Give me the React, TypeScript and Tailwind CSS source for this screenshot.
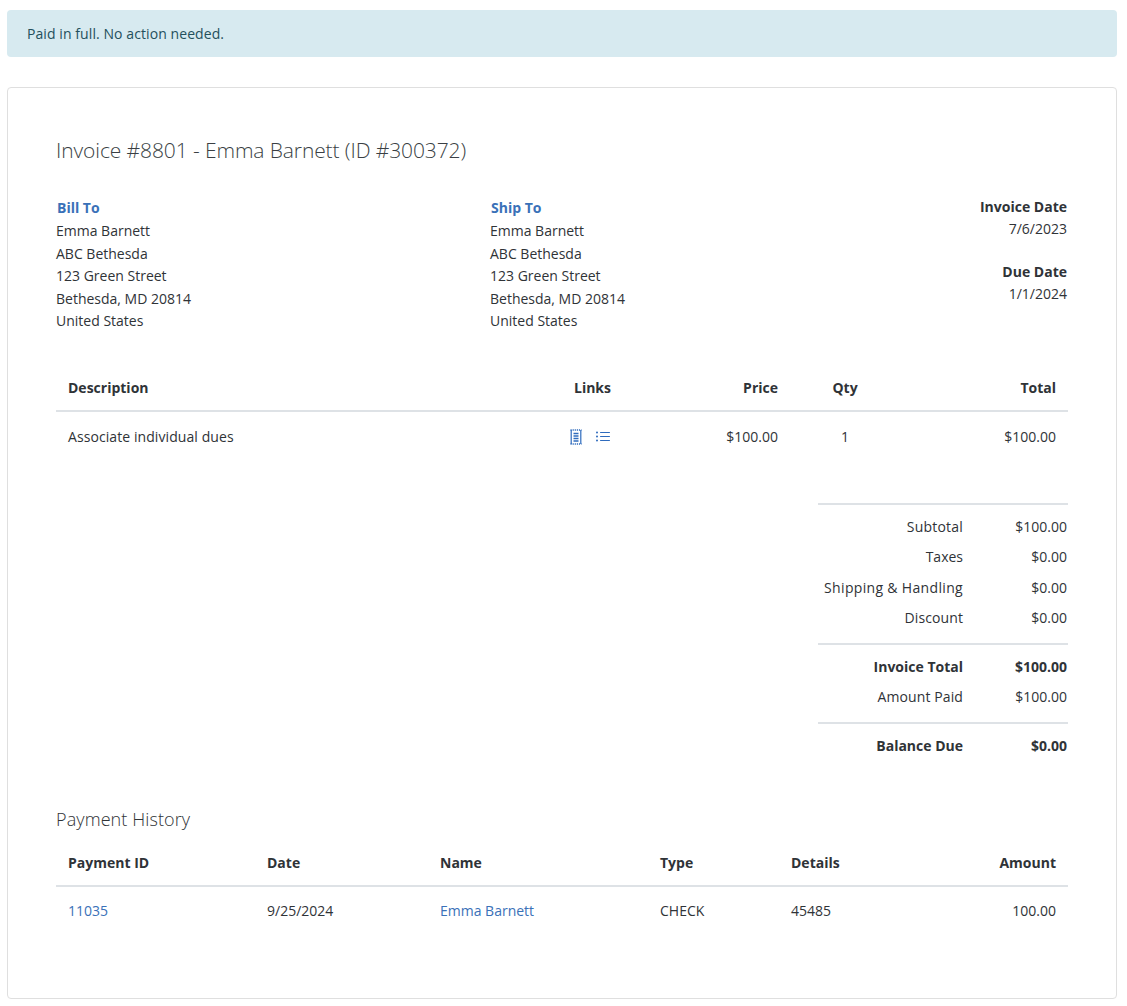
import { BsListUl } from "react-icons/bs";

const address = ["Emma Barnett", "ABC Bethesda", "123 Green Street", "Bethesda, MD 20814", "United States"];

function ReceiptIcon() {
  return (
    <svg width="12" height="16" viewBox="0 0 12 16" fill="none" stroke="currentColor" strokeWidth="1.2">
      <path d="M1.2 1v14M10.8 1v14" />
      <path d="M0.5 1h11M0.5 15h11" strokeWidth="1.3" strokeDasharray="1.2 0.9" />
      <path d="M3.5 4.5h5M3.5 7h5M3.5 9.5h5M3.5 12h5" strokeWidth="1.3" />
    </svg>
  );
}

function Address({ title, className }: { title: string; className: string }) {
  return (
    <div className={className}>
      <div className="h-[24px] pl-px font-bold leading-[23px] text-[#3a71b8]">{title}</div>
      {address.map((line) => (
        <div key={line} className="h-[22.5px] leading-[22.5px]">
          {line}
        </div>
      ))}
    </div>
  );
}

function SummaryRow({ label, value, bold, height, labelClass }: { label: string; value: string; bold?: boolean; height: string; labelClass?: string }) {
  return (
    <div className={`flex items-center ${height} ${bold ? "font-bold" : ""}`}>
      <div className={`w-[145px] whitespace-nowrap text-right ${labelClass ?? ""}`}>{label}</div>
      <div className="flex-1 pr-px text-right">{value}</div>
    </div>
  );
}

export default function App() {
  return (
    <div className="min-h-[1006px] bg-white pt-[10px] pl-[7px] pr-[10px] text-[14px] text-[#2f3337] [font-family:'Open_Sans',sans-serif]">
      <div className="flex h-[47px] items-center rounded bg-[#d7eaf0] px-5 text-[#24505c] tracking-[0.08px]">Paid in full. No action needed.</div>

      <div className="mt-[30px] h-[912px] rounded border border-[#dfdfdf] px-12 pt-[48px]">
        <h1 className="text-[21px] font-light leading-[28px] text-[#3a3f44] tracking-[-0.1px]">Invoice #8801 - Emma Barnett (ID #300372)</h1>

        <div className="mt-[32px] flex h-[135px]">
          <Address title="Bill To" className="w-[434px]" />
          <Address title="Ship To" className="flex-1" />
          <div className="pr-px text-right leading-[22px]">
            <div className="font-bold">Invoice Date</div>
            <div>7/6/2023</div>
            <div className="mt-[21px] font-bold">Due Date</div>
            <div>1/1/2024</div>
          </div>
        </div>

        <div className="mt-[34px] flex h-[47px] items-center border-b-2 border-[#dee2e6] px-3 font-bold">
          <div className="flex-1">Description</div>
          <div className="w-[48px] text-right">Links</div>
          <div className="w-[167px] text-right">Price</div>
          <div className="w-[134px] text-center">Qty</div>
          <div className="w-[144px] text-right">Total</div>
        </div>
        <div className="flex h-[48px] items-center px-3">
          <div className="flex-1 tracking-[0.08px]">Associate individual dues</div>
          <div className="flex w-[48px] items-center justify-end gap-[13px] pt-[2px] text-[#2f6bbd]">
            <ReceiptIcon />
            <BsListUl size={16} />
          </div>
          <div className="w-[167px] text-right">$100.00</div>
          <div className="w-[134px] text-center">1</div>
          <div className="w-[144px] text-right">$100.00</div>
        </div>

        <div className="mt-[43px] ml-auto w-[250px]">
          <div className="border-t-2 border-[#dee2e6] pt-[6px] pb-[10px]">
            <SummaryRow label="Subtotal" value="$100.00" height="h-[30.5px]" labelClass="tracking-[0.2px]" />
            <SummaryRow label="Taxes" value="$0.00" height="h-[30.5px]" />
            <SummaryRow label="Shipping & Handling" value="$0.00" height="h-[30.5px]" labelClass="tracking-[0.33px]" />
            <SummaryRow label="Discount" value="$0.00" height="h-[30.5px]" labelClass="tracking-[0.1px]" />
          </div>
          <div className="border-t-2 border-[#dee2e6] pt-[6px] pb-[11px]">
            <SummaryRow label="Invoice Total" value="$100.00" bold height="h-[30px]" />
            <SummaryRow label="Amount Paid" value="$100.00" height="h-[30px]" labelClass="tracking-[0.1px]" />
          </div>
          <div className="border-t-2 border-[#dee2e6] pt-[6px]">
            <SummaryRow label="Balance Due" value="$0.00" bold height="h-[30px]" />
          </div>
        </div>

        <h2 className="mt-[47px] text-[18px] font-light leading-[24px] text-[#2f3337] tracking-[0.1px]">Payment History</h2>
        <div className="mt-[9px] flex h-[47px] items-center border-b-2 border-[#dee2e6] px-3 font-bold">
          <div className="w-[199px]">Payment ID</div>
          <div className="w-[173px]">Date</div>
          <div className="w-[220px]">Name</div>
          <div className="w-[131px]">Type</div>
          <div className="flex-1">Details</div>
          <div>Amount</div>
        </div>
        <div className="flex h-[47px] items-center px-3">
          <div className="w-[199px] text-[#3a71b8]">11035</div>
          <div className="w-[173px]">9/25/2024</div>
          <div className="w-[220px] text-[#3a71b8]">Emma Barnett</div>
          <div className="w-[131px]">CHECK</div>
          <div className="flex-1">45485</div>
          <div>100.00</div>
        </div>
      </div>
    </div>
  );
}
